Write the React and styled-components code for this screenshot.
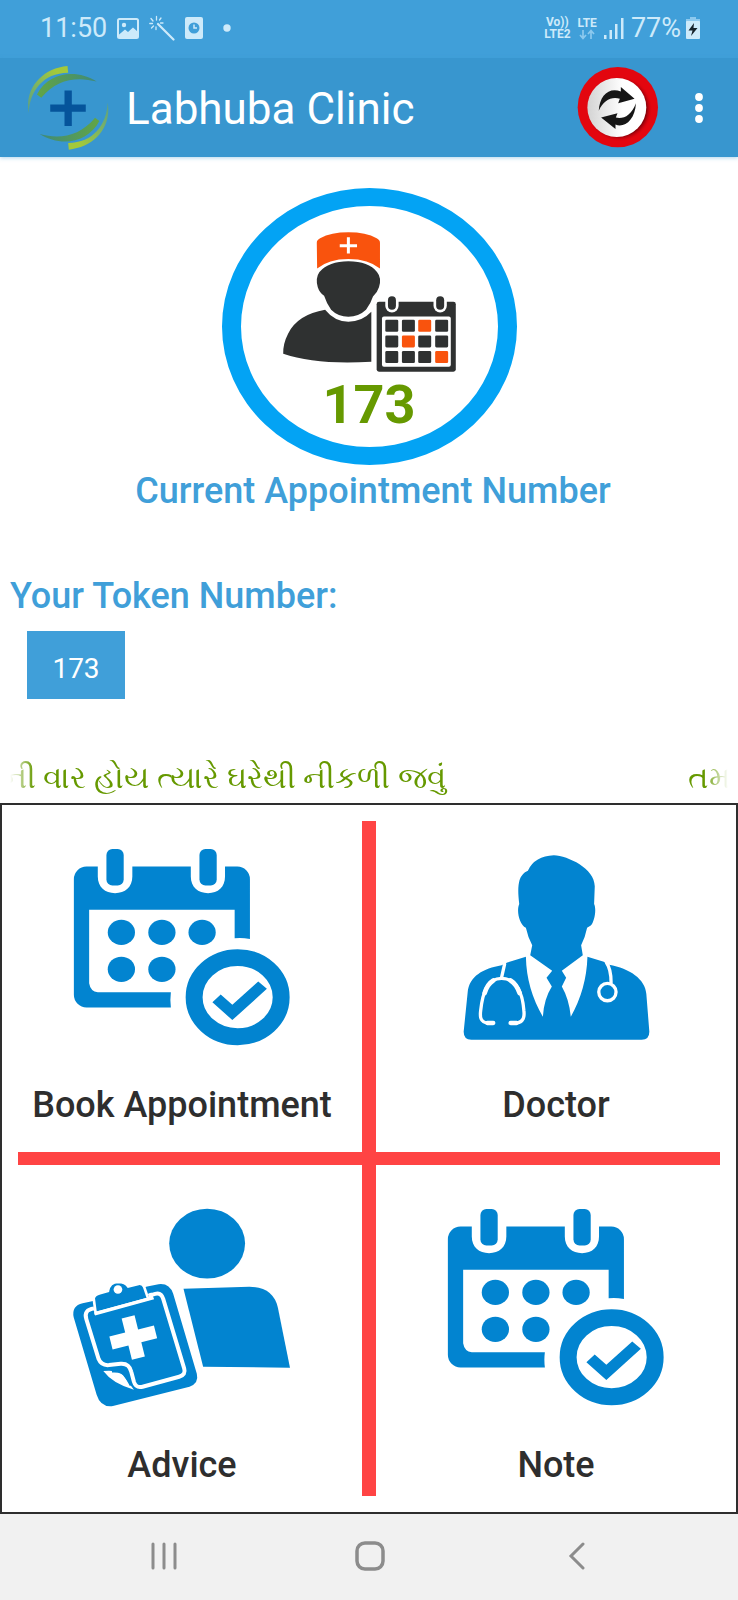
import React from 'react';
import styled, { createGlobalStyle } from 'styled-components';

const GlobalStyle = createGlobalStyle`
  * {
    box-sizing: border-box;
  }

  body {
    margin: 0;
    background: #ffffff;
    font-family: Roboto, 'Noto Sans', sans-serif;
  }

  button {
    border: none;
    padding: 0;
    margin: 0;
    background: none;
    font-family: inherit;
    cursor: pointer;
  }

  svg {
    display: block;
    flex: none;
  }
`;

const Screen = styled.div`
  min-height: 100vh;
  display: flex;
  flex-direction: column;
`;

// Phone status bar
const StatusBar = styled.div`
  height: 58px;
  padding: 0 38px 2px 40px;
  display: flex;
  align-items: center;
  justify-content: space-between;
  background: #409fd9;
  color: #cdeafa;
`;

const StatusGroup = styled.div`
  display: flex;
  align-items: center;
  gap: ${(props) => props.$gap}px;
`;

const StatusText = styled.span`
  font-size: 27px;
  line-height: 32px;
`;

const NetworkLabel = styled.span`
  display: flex;
  flex-direction: column;
  align-items: center;
  font-size: 12px;
  line-height: 12px;
  font-weight: 700;
`;

// App bar
const AppBar = styled.header`
  height: 99px;
  padding: 0 35px 0 27px;
  display: flex;
  align-items: center;
  background: #3896cf;
  box-shadow: 0 1px 4px rgba(56, 150, 207, 0.4);
`;

const AppTitle = styled.h1`
  flex: 1;
  margin: 0 0 0 17px;
  padding-top: 2px;
  font-size: 44px;
  line-height: 52px;
  font-weight: 400;
  color: #ffffff;
`;

const BarButton = styled.button`
  margin-left: ${(props) => props.$space || 0}px;
`;

// Current appointment
const Current = styled.section`
  padding-top: 31px;
  display: flex;
  flex-direction: column;
  align-items: center;
`;

const Oval = styled.div`
  width: 295px;
  height: 277px;
  padding-top: 26px;
  display: flex;
  flex-direction: column;
  align-items: center;
  border: solid #03a3f4;
  border-width: 18px 19px;
  border-radius: 50%;
`;

const CurrentNumber = styled.strong`
  margin-top: 6px;
  font-size: 54px;
  line-height: 54px;
  font-weight: 700;
  color: #669900;
`;

const Heading = styled.h2`
  margin: 0;
  font-size: 36px;
  line-height: 44px;
  font-weight: 500;
  color: #409fd9;
`;

const CurrentHeading = styled(Heading)`
  padding: 4px 0 0 8px;
`;

// Token
const Token = styled.section`
  padding: 61px 10px 0;
`;

const TokenButton = styled.button`
  display: block;
  min-width: 98px;
  height: 68px;
  margin: 13px 0 0 17px;
  padding: 8px 24px 0;
  background: #409fd9;
  color: #ffffff;
  font-size: 28px;
  line-height: 32px;
`;

const Marquee = styled.div`
  height: 50px;
  margin: 54px 10px 0;
  display: flex;
  gap: 242px;
  overflow: hidden;
  font-size: 31px;
  line-height: 50px;
  font-weight: 500;
  white-space: nowrap;
  color: #669900;
  mask-image: linear-gradient(to right, transparent, #000 24px, #000 calc(100% - 24px), transparent);
`;

const MarqueeTail = styled.span`
  flex: none;
  width: 436px;
  display: flex;
  justify-content: flex-end;
`;

const MarqueeHead = styled.span`
  flex: none;
`;

// Menu
const Menu = styled.nav`
  flex: 1;
  display: grid;
  grid-template-columns: 1fr 14px 1fr;
  grid-template-rows: 1fr 13px 1fr;
  border: 2px solid #2e2e2e;
`;

const VerticalLine = styled.div`
  grid-column: 2;
  grid-row: 1 / 4;
  margin: 16px 0;
  background: #ff4444;
`;

const HorizontalLine = styled.div`
  grid-column: 1 / 4;
  grid-row: 2;
  margin: 0 16px;
  background: #ff4444;
`;

const Tile = styled.button`
  grid-column: ${(props) => props.$column};
  grid-row: ${(props) => props.$row};
  padding: 44px 0 25px;
  display: flex;
  flex-direction: column;
  align-items: center;
  gap: 38px;
  font-size: 36px;
  line-height: 44px;
  font-weight: 500;
  color: #2e2e2e;
`;

const TileIcon = styled.span`
  height: 196px;
  display: flex;
  align-items: center;
`;

// Phone navigation bar
const NavBar = styled.footer`
  height: 86px;
  padding: 0 58px 2px 61px;
  display: grid;
  grid-template-columns: repeat(3, 1fr);
  background: #f1f1f1;
`;

const NavButton = styled.button`
  display: flex;
  align-items: center;
  justify-content: center;
`;

const PictureIcon = () => (
  <svg width="22" height="21" viewBox="0 0 22 21">
    <rect x="1" y="1" width="20" height="19" rx="1.5" fill="none" stroke="currentColor" strokeWidth="2" />
    <circle cx="7" cy="7" r="2.2" fill="currentColor" />
    <path d="M1.5 17 L8 11.5 L11 14 L16 9.5 L21 14 V20 H1.5Z" fill="currentColor" />
  </svg>
);

const WandIcon = () => (
  <svg width="26" height="26" viewBox="0 0 26 26" fill="none" stroke="currentColor" strokeLinecap="round">
    <path d="M9 9 L24.5 24.5" strokeWidth="2.2" />
    <path
      d="M7.5 5 V1.5 M4 6 L2 3.5 M3.5 8.5 H.8 M4.500 11 L2.5 13 M7 12 V14.5 M10.5 5 L12 3 M11.5 8 H14"
      strokeWidth="1.3"
    />
  </svg>
);

const ClockDocIcon = () => (
  <svg width="18" height="22" viewBox="0 0 18 22">
    <rect width="18" height="22" rx="2" fill="currentColor" />
    <circle cx="9" cy="11" r="5.5" fill="#409fd9" />
    <path d="M9 7.5 V11 H12" fill="none" stroke="currentColor" strokeWidth="1.5" />
  </svg>
);

const DotIcon = () => (
  <svg width="8" height="8" viewBox="0 0 8 8">
    <circle cx="4" cy="4" r="3.7" fill="currentColor" />
  </svg>
);

const DataArrows = () => (
  <svg width="16" height="11" viewBox="0 0 16 11" fill="none" stroke="#8cc9ee" strokeWidth="1.7">
    <path d="M4 1 V9 M1 6 L4 9.5 L7 6 M12 10 V2 M9 5 L12 1.5 L15 5" />
  </svg>
);

const SignalIcon = () => (
  <svg width="20" height="21" viewBox="0 0 20 21" fill="currentColor">
    <rect x="0" y="17" width="2.5" height="4" />
    <rect x="5.5" y="12" width="2.5" height="9" />
    <rect x="11" y="6" width="2.5" height="15" />
    <rect x="17" y="0" width="2.5" height="21" />
  </svg>
);

const BatteryIcon = () => (
  <svg width="14" height="22" viewBox="0 0 14 22">
    <path d="M4 0 H10 V2 H14 V5 H0 V2 H4Z" fill="#8cc9ee" />
    <rect y="4" width="14" height="18" rx="1" fill="currentColor" />
    <path d="M8 6 L2.5 13.5 H6.5 L5 19 L11.5 11 H7.5Z" fill="#16222b" />
  </svg>
);

const ClinicLogo = () => (
  <svg width="82" height="84" viewBox="82 195 247 253">
    <defs>
      <linearGradient id="lime" x1="1" y1="0" x2="0" y2="1">
        <stop offset="0.2" stopColor="#a3c93a" />
        <stop offset="1" stopColor="#5a9f86" />
      </linearGradient>
      <linearGradient id="leaf" x1="0" y1="0" x2="1" y2="0">
        <stop offset="0" stopColor="#62a545" />
        <stop offset="1" stopColor="#3f8a78" />
      </linearGradient>
    </defs>
    {[0, 180].map((angle) => (
      <g key={angle} transform={`rotate(${angle} 206 321)`}>
        <path d="M204 195 C128 202 74 262 87 337 C90 270 130 216 206 215Z" fill="url(#lime)" />
        <path d="M112 281 C148 212 232 204 292 242 C232 226 172 234 125 291Z" fill="url(#leaf)" />
      </g>
    ))}
    <path d="M195 269 H217 V311 H259 V333 H217 V376 H195 V333 H152 V311 H195Z" fill="#05549b" />
  </svg>
);

const RefreshIcon = () => (
  <svg width="82" height="82" viewBox="626 196 245 245">
    <defs>
      <linearGradient id="knob" x1="0" y1="0" x2="1" y2="0">
        <stop offset="0" stopColor="#d3d3d3" />
        <stop offset="0.6" stopColor="#ffffff" />
      </linearGradient>
      <radialGradient id="knobShade">
        <stop offset="0.82" stopColor="#7a0008" stopOpacity="0.9" />
        <stop offset="1" stopColor="#e3000f" stopOpacity="0" />
      </radialGradient>
    </defs>
    <circle cx="748" cy="316" r="120" fill="#e3060f" />
    <circle cx="753" cy="321" r="98" fill="url(#knobShade)" />
    <circle cx="745" cy="317" r="88" fill="url(#knob)" />
    <g fill="#161616" transform="translate(0 -3)">
      <path d="M691 330 C693 284 722 258 757 272 L757 259 L798 294 L749 307 L754 294 C730 286 705 298 691 330Z" />
      <path d="M802 307 C800 356 768 382 741 371 L741 384 L698 350 L747 337 L742 350 C765 355 788 344 802 307Z" />
    </g>
  </svg>
);

const MoreIcon = () => (
  <svg width="8" height="30" viewBox="0 0 8 30" fill="#ffffff">
    <circle cx="4" cy="4" r="3.9" />
    <circle cx="4" cy="15" r="3.9" />
    <circle cx="4" cy="26" r="3.9" />
  </svg>
);

const orangeCells = ['2-0', '1-1', '3-2'];

const PatientIcon = () => (
  <svg width="174" height="140" viewBox="248 184 522 421" fill="#2f3131">
    <path
      d="M352 216 Q352 208 362 203 Q395 185 447 185 Q500 185 532 203 Q542 208 542 216 V294 Q508 265 447 265 Q387 265 353 294Z"
      fill="#f9530d"
    />
    <path d="M447 200 V249 M421 225 H473" stroke="#ffffff" strokeWidth="9" />
    <path d="M360 304 Q388 272 447 272 Q508 272 533 304 Q548 322 539 350 Q534 366 521 378 Q514 400 500 418 Q478 439 447 439 Q416 439 395 418 Q381 398 374 376 Q360 366 355 350 Q347 322 360 304Z" />
    <path d="M377 418 Q406 454 447 454 Q488 454 516 424 V574 Q350 584 251 550 Q250 520 266 489 Q295 432 377 418Z" />
    <rect x="532" y="394" width="238" height="210" rx="7" />
    {[578, 723].map((x) => (
      <g key={x}>
        <rect x={x - 20} y="371" width="40" height="55" rx="20" fill="#ffffff" />
        <rect x={x - 12} y="377" width="24" height="41" rx="12" />
      </g>
    ))}
    <rect x="548" y="438" width="207" height="151" rx="6" fill="#ffffff" />
    {[448, 495, 542].map((y, row) =>
      [558, 608, 657, 708].map((x, col) => (
        <rect
          key={`${col}-${row}`}
          x={x}
          y={y}
          width="39"
          height="36"
          rx="4"
          fill={orangeCells.includes(`${col}-${row}`) ? '#f9530d' : '#2f3131'}
        />
      ))
    )}
  </svg>
);

const CalendarIcon = () => (
  <svg width="217" height="196" viewBox="97 53 652 590" fill="#0284d0" overflow="visible">
    <path d="M134 106 H168 V136 C168 168 190 186 220 186 C250 186 272 168 272 136 V106 H448 V136 C448 168 470 186 500 186 C530 186 551 168 551 136 V106 H588 A38 38 0 0 1 626 144 V324 Q600 319 580 322 V236 H142 V457 Q146 482 168 484 H388 Q385 507 388 530 H134 A38 38 0 0 1 96 492 V144 A38 38 0 0 1 134 106Z" />
    <rect x="194" y="53" width="52" height="110" rx="18" />
    <rect x="474" y="53" width="52" height="110" rx="18" />
    <ellipse cx="239" cy="304" rx="41" ry="38" />
    <ellipse cx="361" cy="304" rx="41" ry="38" />
    <ellipse cx="482" cy="304" rx="41" ry="38" />
    <ellipse cx="239" cy="415" rx="41" ry="38" />
    <ellipse cx="361" cy="415" rx="41" ry="38" />
    <ellipse cx="589" cy="499" rx="131" ry="119" fill="none" stroke="#0284d0" strokeWidth="51" />
    <path d="M513 514 L538 491 L573 522 L651 452 L677 474 L573 568Z" />
  </svg>
);

const DoctorIcon = () => (
  <svg width="187" height="185" viewBox="190 67 560 556">
    <path
      d="M462 68 C505 70 586 108 585 162 L583 214 C591 230 584 268 573 279 L562 286 Q556 316 544 338 L549 368 L486 415 L499 436 L486 462 Q508 500 513 553 Q560 470 563 373 L612 388 L628 397 C690 408 737 440 740 485 L749 598 Q749 622 726 622 H214 Q191 622 191 598 L203 480 C208 430 250 408 305 398 L322 390 L378 373 Q380 470 429 553 Q432 500 456 462 L440 436 L457 415 L391 368 L397 338 Q384 315 378 286 C358 275 349 235 358 214 C354 180 354 160 359 142 Q365 122 384 114 Q405 70 462 68Z"
      fill="#0284d0"
    />
    <g fill="none" stroke="#ffffff" strokeLinecap="round" strokeWidth="10">
      <path d="M314 395 L305 435 M264 572 C240 570 240 552 242 535 C248 480 262 438 305 438 C348 438 368 480 372 535 C374 552 372 570 348 572" />
      <path d="M262 572 H280 M332 572 H350" strokeWidth="13" />
      <path d="M280 444 Q262 455 254 482 M332 444 Q350 455 359 482" strokeWidth="14" />
      <path d="M620 390 Q634 410 634 450" />
      <circle cx="623" cy="479" r="26" />
    </g>
  </svg>
);

const AdviceIcon = () => (
  <svg width="217" height="198" viewBox="98 54 652 595" fill="#0284d0" overflow="visible">
    <ellipse cx="498" cy="161" rx="114" ry="105" />
    <path d="M427 297 L625 291 Q697 291 711 355 L747 534 L486 531Z" />
    <path d="M152 334 L124 340 Q90 348 97 382 L166 615 Q178 654 215 649 L445 591 Q474 580 467 552 L396 312 Q385 279 352 283 L318 290Z" />
    <path
      d="M158 356 Q126 360 135 388 L172 508 Q180 528 203 526 L238 522 Q264 520 270 546 L278 576 Q284 596 304 591 L414 561 Q435 555 429 536 L366 327 Q360 307 342 312 L322 318"
      fill="none"
      stroke="#ffffff"
      strokeWidth="12"
      strokeLinejoin="round"
    />
    <path
      d="M157 325 Q160 314 176 310 L200 303 Q204 277 231 276 Q252 276 261 290 L292 282 Q305 280 309 292 L321 327 L163 370Z"
      stroke="#ffffff"
      strokeWidth="8"
    />
    <circle cx="230" cy="299" r="13" fill="#ffffff" />
    <path d="M160 372 L332 325 L326 310" fill="none" stroke="#ffffff" strokeWidth="10" />
    <path d="M186 544 Q240 538 254 568 L278 600 Q214 582 186 544Z" fill="#ffffff" />
    <path d="M212 546 Q246 544 254 562 L268 588" fill="none" stroke="#0284d0" strokeWidth="5" />
    <path
      d="M256 379 H296 V423 H345 V463 H296 V507 H256 V463 H207 V423 H256Z"
      fill="#ffffff"
      transform="rotate(-14 276 443)"
    />
  </svg>
);

const RecentsIcon = () => (
  <svg width="28" height="28" viewBox="0 0 28 28" stroke="#8c8c8c" strokeWidth="3" strokeLinecap="round">
    <path d="M3 2 V26 M14 2 V26 M25 2 V26" />
  </svg>
);

const HomeIcon = () => (
  <svg width="30" height="30" viewBox="0 0 30 30" fill="none" stroke="#8c8c8c" strokeWidth="3.5">
    <rect x="2" y="2" width="26" height="26" rx="8" />
  </svg>
);

const BackIcon = () => (
  <svg width="18" height="28" viewBox="0 0 18 28" fill="none" stroke="#8c8c8c" strokeWidth="3" strokeLinecap="round">
    <path d="M15 2 L3 14 L15 26" />
  </svg>
);

const menuItems = [
  { label: 'Book Appointment', icon: <CalendarIcon />, column: 1, row: 1 },
  { label: 'Doctor', icon: <DoctorIcon />, column: 3, row: 1 },
  { label: 'Advice', icon: <AdviceIcon />, column: 1, row: 3 },
  { label: 'Note', icon: <CalendarIcon />, column: 3, row: 3 },
];

const App = () => {
  const tokenNumber = 173;

  return (
    <Screen>
      <GlobalStyle />

      <StatusBar>
        <StatusGroup $gap={20}>
          <StatusGroup $gap={10}>
            <StatusText>11:50</StatusText>
            <PictureIcon />
            <WandIcon />
            <ClockDocIcon />
          </StatusGroup>
          <DotIcon />
        </StatusGroup>
        <StatusGroup $gap={7}>
          <NetworkLabel>
            <span>Vo))</span>
            <span>LTE2</span>
          </NetworkLabel>
          <NetworkLabel>
            <span>LTE</span>
            <DataArrows />
          </NetworkLabel>
          <SignalIcon />
          <StatusGroup $gap={5}>
            <StatusText>77%</StatusText>
            <BatteryIcon />
          </StatusGroup>
        </StatusGroup>
      </StatusBar>

      <AppBar>
        <ClinicLogo />
        <AppTitle>Labhuba Clinic</AppTitle>
        <BarButton aria-label="Refresh">
          <RefreshIcon />
        </BarButton>
        <BarButton aria-label="More options" $space={36}>
          <MoreIcon />
        </BarButton>
      </AppBar>

      <Current>
        <Oval>
          <PatientIcon />
          <CurrentNumber>{tokenNumber}</CurrentNumber>
        </Oval>
        <CurrentHeading>Current Appointment Number</CurrentHeading>
      </Current>

      <Token>
        <Heading>Your Token Number:</Heading>
        <TokenButton>{tokenNumber}</TokenButton>
      </Token>

      <Marquee>
        <MarqueeTail>ની વાર હોય ત્યારે ઘરેથી નીકળી જવું</MarqueeTail>
        <MarqueeHead>તમ</MarqueeHead>
      </Marquee>

      <Menu>
        {menuItems.map((item) => (
          <Tile key={item.label} $column={item.column} $row={item.row}>
            <TileIcon>{item.icon}</TileIcon>
            {item.label}
          </Tile>
        ))}
        <VerticalLine />
        <HorizontalLine />
      </Menu>

      <NavBar>
        <NavButton aria-label="Recents">
          <RecentsIcon />
        </NavButton>
        <NavButton aria-label="Home">
          <HomeIcon />
        </NavButton>
        <NavButton aria-label="Back">
          <BackIcon />
        </NavButton>
      </NavBar>
    </Screen>
  );
};

export default App;
